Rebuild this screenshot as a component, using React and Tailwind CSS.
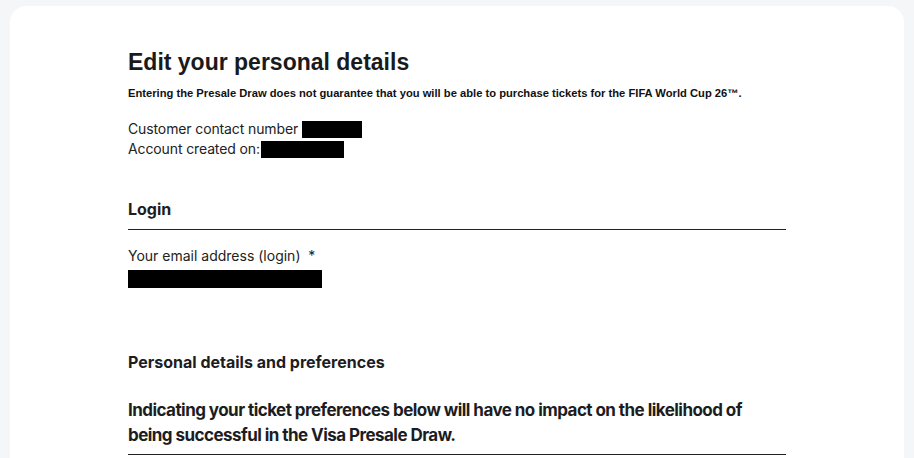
export default function App() {
  return (
    <div className="min-h-screen bg-[#f5f6f8] pt-[6px] px-[10px]" style={{ fontFamily: "Inter, 'Liberation Sans', sans-serif" }}>
      <div className="bg-white rounded-t-[16px] h-[460px] pl-[118px] pt-[42px]">
        <div className="w-[658px] text-[#1d1d1f]">
          <h1 className="text-[23px] font-bold leading-[28px] text-[#1a1a1a]" style={{ fontFamily: "'Liberation Sans', Arial, sans-serif" }}>
            Edit your personal details
          </h1>
          <p className="mt-[10px] text-[11.2px] font-bold leading-[14px] text-[#111]" style={{ fontFamily: "'Liberation Sans', Arial, sans-serif" }}>
            Entering the Presale Draw does not guarantee that you will be able to purchase tickets for the FIFA World Cup 26™.
          </p>
          <div className="mt-[19px] text-[14px] leading-[20px] text-[#222] tracking-[-0.12px]">
            <div className="flex items-center">
              <span>Customer contact number</span>
              <span className="ml-[4px] inline-block w-[60px] h-[17px] bg-black" />
            </div>
            <div className="flex items-center">
              <span>Account created on:</span>
              <span className="ml-[1px] inline-block w-[83px] h-[17px] bg-black" />
            </div>
          </div>
          <h2 className="mt-[40px] text-[16px] font-bold leading-[20px] pb-[10px] border-b border-[#222]">Login</h2>
          <div className="mt-[16px] text-[14px] leading-[20px] text-[#222]">Your email address (login)&nbsp; *</div>
          <div className="mt-[4px] w-[194px] h-[18px] bg-black" />
          <h2 className="mt-[64px] text-[16px] font-bold leading-[20px]">Personal details and preferences</h2>
          <p className="mt-[26px] text-[17px] font-bold leading-[25px] tracking-[-0.55px] pb-[6px] border-b border-[#222]">
            Indicating your ticket preferences below will have no impact on the likelihood of being successful in the Visa Presale Draw.
          </p>
        </div>
      </div>
    </div>
  );
}
